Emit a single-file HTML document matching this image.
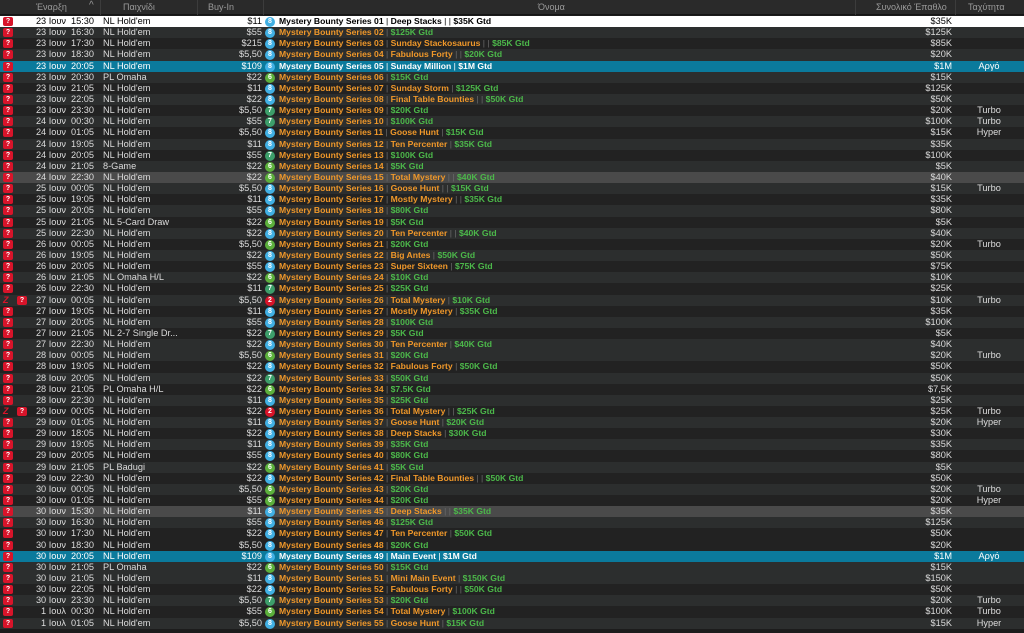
<!DOCTYPE html>
<html><head><meta charset="utf-8">
<style>
*{margin:0;padding:0;box-sizing:border-box}
body{width:1024px;height:633px;background:#1c1c1c;font-family:"Liberation Sans",sans-serif;overflow:hidden;position:relative;color:#dcdcdc;font-size:9.2px}
.hd{position:absolute;left:0;top:0;width:1024px;height:15px;background:#2a2a2a;border-bottom:1px solid #151515;color:#9a9a9a;font-size:9px}
.hd span{position:absolute;top:2px}
.hd i{position:absolute;top:0;width:1px;height:15px;background:#3c3c3c}
.rows{position:absolute;left:0;top:16px;width:1024px}
.r{position:relative;height:11.15px;line-height:11px;background:#222;white-space:nowrap}
.L{background:#2c2e2e}
.G{background:#4a4a4a}
.W{background:#fff;color:#000}
.B{background:#0b7a9c;color:#fff}
.r>*{position:absolute;top:0}
.q{left:3px;top:1px;width:10px;height:9px;background:#d8142a;border-radius:2px;color:#fff;font-size:7px;font-weight:bold;line-height:9px;text-align:center;font-style:normal}
.z .q{left:17px}
.zz{left:3px;color:#d8142a;font-weight:bold;font-style:italic;font-size:9px}
.d{right:958px;text-align:right}
.t{left:71px}
.g{left:103px}
.b{right:762px;text-align:right}
.c{left:265px;top:1px;width:10px;height:10px;border-radius:50%;color:#fff;font-size:7px;font-weight:bold;line-height:10px;text-align:center;font-style:normal}
.b8{background:#41b0e4}.b6{background:#5cb03c}.b7{background:#3d9e6a}.b2{background:#d8142a}
.n{left:279px;font-weight:bold;font-size:8.6px}
.n em{font-style:normal;color:#f0982a}
.n u{text-decoration:none;color:#6a6a6a;font-weight:normal}
.n b{color:#4cb84a}
.W .n em,.W .n u,.W .n b,.B .n em,.B .n u,.B .n b{color:inherit}
.p{right:72px;text-align:right}
.s{left:955px;width:68px;text-align:center}
</style></head><body>
<div class="hd">
<span style="left:36px">Έναρξη</span><span style="left:89px;font-size:10px;top:0">^</span><i style="left:100px"></i>
<span style="left:123px">Παιχνίδι</span><i style="left:197px"></i>
<span style="left:208px">Buy-In</span><i style="left:263px"></i>
<span style="left:538px">Όνομα</span><i style="left:855px"></i>
<span style="left:876px">Συνολικό Έπαθλο</span><i style="left:955px"></i>
<span style="left:968px">Ταχύτητα</span>
</div>
<div class="rows">
<div class="r W"><i class="q">?</i><span class="d">23 Ιουν</span><span class="t">15:30</span><span class="g">NL Hold'em</span><span class="b">$11</span><i class="c b8">8</i><span class="n"><em>Mystery Bounty Series 01</em><u> | </u><em>Deep Stacks</em><u> | | </u><b>$35K Gtd</b></span><span class="p">$35K</span></div>
<div class="r L"><i class="q">?</i><span class="d">23 Ιουν</span><span class="t">16:30</span><span class="g">NL Hold'em</span><span class="b">$55</span><i class="c b8">8</i><span class="n"><em>Mystery Bounty Series 02</em><u> | </u><b>$125K Gtd</b></span><span class="p">$125K</span></div>
<div class="r"><i class="q">?</i><span class="d">23 Ιουν</span><span class="t">17:30</span><span class="g">NL Hold'em</span><span class="b">$215</span><i class="c b8">8</i><span class="n"><em>Mystery Bounty Series 03</em><u> | </u><em>Sunday Stackosaurus</em><u> | | </u><b>$85K Gtd</b></span><span class="p">$85K</span></div>
<div class="r L"><i class="q">?</i><span class="d">23 Ιουν</span><span class="t">18:30</span><span class="g">NL Hold'em</span><span class="b">$5,50</span><i class="c b8">8</i><span class="n"><em>Mystery Bounty Series 04</em><u> | </u><em>Fabulous Forty</em><u> | | </u><b>$20K Gtd</b></span><span class="p">$20K</span></div>
<div class="r B"><i class="q">?</i><span class="d">23 Ιουν</span><span class="t">20:05</span><span class="g">NL Hold'em</span><span class="b">$109</span><i class="c b8">8</i><span class="n"><em>Mystery Bounty Series 05</em><u> | </u><em>Sunday Million</em><u> | </u><b>$1M Gtd</b></span><span class="p">$1M</span><span class="s">Αργό</span></div>
<div class="r L"><i class="q">?</i><span class="d">23 Ιουν</span><span class="t">20:30</span><span class="g">PL Omaha</span><span class="b">$22</span><i class="c b6">6</i><span class="n"><em>Mystery Bounty Series 06</em><u> | </u><b>$15K Gtd</b></span><span class="p">$15K</span></div>
<div class="r"><i class="q">?</i><span class="d">23 Ιουν</span><span class="t">21:05</span><span class="g">NL Hold'em</span><span class="b">$11</span><i class="c b8">8</i><span class="n"><em>Mystery Bounty Series 07</em><u> | </u><em>Sunday Storm</em><u> | </u><b>$125K Gtd</b></span><span class="p">$125K</span></div>
<div class="r L"><i class="q">?</i><span class="d">23 Ιουν</span><span class="t">22:05</span><span class="g">NL Hold'em</span><span class="b">$22</span><i class="c b8">8</i><span class="n"><em>Mystery Bounty Series 08</em><u> | </u><em>Final Table Bounties</em><u> | | </u><b>$50K Gtd</b></span><span class="p">$50K</span></div>
<div class="r"><i class="q">?</i><span class="d">23 Ιουν</span><span class="t">23:30</span><span class="g">NL Hold'em</span><span class="b">$5,50</span><i class="c b7">7</i><span class="n"><em>Mystery Bounty Series 09</em><u> | </u><b>$20K Gtd</b></span><span class="p">$20K</span><span class="s">Turbo</span></div>
<div class="r L"><i class="q">?</i><span class="d">24 Ιουν</span><span class="t">00:30</span><span class="g">NL Hold'em</span><span class="b">$55</span><i class="c b7">7</i><span class="n"><em>Mystery Bounty Series 10</em><u> | </u><b>$100K Gtd</b></span><span class="p">$100K</span><span class="s">Turbo</span></div>
<div class="r"><i class="q">?</i><span class="d">24 Ιουν</span><span class="t">01:05</span><span class="g">NL Hold'em</span><span class="b">$5,50</span><i class="c b8">8</i><span class="n"><em>Mystery Bounty Series 11</em><u> | </u><em>Goose Hunt</em><u> | </u><b>$15K Gtd</b></span><span class="p">$15K</span><span class="s">Hyper</span></div>
<div class="r L"><i class="q">?</i><span class="d">24 Ιουν</span><span class="t">19:05</span><span class="g">NL Hold'em</span><span class="b">$11</span><i class="c b8">8</i><span class="n"><em>Mystery Bounty Series 12</em><u> | </u><em>Ten Percenter</em><u> | </u><b>$35K Gtd</b></span><span class="p">$35K</span></div>
<div class="r"><i class="q">?</i><span class="d">24 Ιουν</span><span class="t">20:05</span><span class="g">NL Hold'em</span><span class="b">$55</span><i class="c b7">7</i><span class="n"><em>Mystery Bounty Series 13</em><u> | </u><b>$100K Gtd</b></span><span class="p">$100K</span></div>
<div class="r L"><i class="q">?</i><span class="d">24 Ιουν</span><span class="t">21:05</span><span class="g">8-Game</span><span class="b">$22</span><i class="c b6">6</i><span class="n"><em>Mystery Bounty Series 14</em><u> | </u><b>$5K Gtd</b></span><span class="p">$5K</span></div>
<div class="r G"><i class="q">?</i><span class="d">24 Ιουν</span><span class="t">22:30</span><span class="g">NL Hold'em</span><span class="b">$22</span><i class="c b6">6</i><span class="n"><em>Mystery Bounty Series 15</em><u> | </u><em>Total Mystery</em><u> | | </u><b>$40K Gtd</b></span><span class="p">$40K</span></div>
<div class="r L"><i class="q">?</i><span class="d">25 Ιουν</span><span class="t">00:05</span><span class="g">NL Hold'em</span><span class="b">$5,50</span><i class="c b8">8</i><span class="n"><em>Mystery Bounty Series 16</em><u> | </u><em>Goose Hunt</em><u> | | </u><b>$15K Gtd</b></span><span class="p">$15K</span><span class="s">Turbo</span></div>
<div class="r"><i class="q">?</i><span class="d">25 Ιουν</span><span class="t">19:05</span><span class="g">NL Hold'em</span><span class="b">$11</span><i class="c b8">8</i><span class="n"><em>Mystery Bounty Series 17</em><u> | </u><em>Mostly Mystery</em><u> | | </u><b>$35K Gtd</b></span><span class="p">$35K</span></div>
<div class="r L"><i class="q">?</i><span class="d">25 Ιουν</span><span class="t">20:05</span><span class="g">NL Hold'em</span><span class="b">$55</span><i class="c b8">8</i><span class="n"><em>Mystery Bounty Series 18</em><u> | </u><b>$80K Gtd</b></span><span class="p">$80K</span></div>
<div class="r"><i class="q">?</i><span class="d">25 Ιουν</span><span class="t">21:05</span><span class="g">NL 5-Card Draw</span><span class="b">$22</span><i class="c b6">6</i><span class="n"><em>Mystery Bounty Series 19</em><u> | </u><b>$5K Gtd</b></span><span class="p">$5K</span></div>
<div class="r L"><i class="q">?</i><span class="d">25 Ιουν</span><span class="t">22:30</span><span class="g">NL Hold'em</span><span class="b">$22</span><i class="c b8">8</i><span class="n"><em>Mystery Bounty Series 20</em><u> | </u><em>Ten Percenter</em><u> | | </u><b>$40K Gtd</b></span><span class="p">$40K</span></div>
<div class="r"><i class="q">?</i><span class="d">26 Ιουν</span><span class="t">00:05</span><span class="g">NL Hold'em</span><span class="b">$5,50</span><i class="c b6">6</i><span class="n"><em>Mystery Bounty Series 21</em><u> | </u><b>$20K Gtd</b></span><span class="p">$20K</span><span class="s">Turbo</span></div>
<div class="r L"><i class="q">?</i><span class="d">26 Ιουν</span><span class="t">19:05</span><span class="g">NL Hold'em</span><span class="b">$22</span><i class="c b8">8</i><span class="n"><em>Mystery Bounty Series 22</em><u> | </u><em>Big Antes</em><u> | </u><b>$50K Gtd</b></span><span class="p">$50K</span></div>
<div class="r"><i class="q">?</i><span class="d">26 Ιουν</span><span class="t">20:05</span><span class="g">NL Hold'em</span><span class="b">$55</span><i class="c b8">8</i><span class="n"><em>Mystery Bounty Series 23</em><u> | </u><em>Super Sixteen</em><u> | </u><b>$75K Gtd</b></span><span class="p">$75K</span></div>
<div class="r L"><i class="q">?</i><span class="d">26 Ιουν</span><span class="t">21:05</span><span class="g">NL Omaha H/L</span><span class="b">$22</span><i class="c b6">6</i><span class="n"><em>Mystery Bounty Series 24</em><u> | </u><b>$10K Gtd</b></span><span class="p">$10K</span></div>
<div class="r"><i class="q">?</i><span class="d">26 Ιουν</span><span class="t">22:30</span><span class="g">NL Hold'em</span><span class="b">$11</span><i class="c b7">7</i><span class="n"><em>Mystery Bounty Series 25</em><u> | </u><b>$25K Gtd</b></span><span class="p">$25K</span></div>
<div class="r L z"><span class="zz">Z</span><i class="q">?</i><span class="d">27 Ιουν</span><span class="t">00:05</span><span class="g">NL Hold'em</span><span class="b">$5,50</span><i class="c b2">2</i><span class="n"><em>Mystery Bounty Series 26</em><u> | </u><em>Total Mystery</em><u> | </u><b>$10K Gtd</b></span><span class="p">$10K</span><span class="s">Turbo</span></div>
<div class="r"><i class="q">?</i><span class="d">27 Ιουν</span><span class="t">19:05</span><span class="g">NL Hold'em</span><span class="b">$11</span><i class="c b8">8</i><span class="n"><em>Mystery Bounty Series 27</em><u> | </u><em>Mostly Mystery</em><u> | </u><b>$35K Gtd</b></span><span class="p">$35K</span></div>
<div class="r L"><i class="q">?</i><span class="d">27 Ιουν</span><span class="t">20:05</span><span class="g">NL Hold'em</span><span class="b">$55</span><i class="c b8">8</i><span class="n"><em>Mystery Bounty Series 28</em><u> | </u><b>$100K Gtd</b></span><span class="p">$100K</span></div>
<div class="r"><i class="q">?</i><span class="d">27 Ιουν</span><span class="t">21:05</span><span class="g">NL 2-7 Single Dr...</span><span class="b">$22</span><i class="c b7">7</i><span class="n"><em>Mystery Bounty Series 29</em><u> | </u><b>$5K Gtd</b></span><span class="p">$5K</span></div>
<div class="r L"><i class="q">?</i><span class="d">27 Ιουν</span><span class="t">22:30</span><span class="g">NL Hold'em</span><span class="b">$22</span><i class="c b8">8</i><span class="n"><em>Mystery Bounty Series 30</em><u> | </u><em>Ten Percenter</em><u> | </u><b>$40K Gtd</b></span><span class="p">$40K</span></div>
<div class="r L"><i class="q">?</i><span class="d">28 Ιουν</span><span class="t">00:05</span><span class="g">NL Hold'em</span><span class="b">$5,50</span><i class="c b6">6</i><span class="n"><em>Mystery Bounty Series 31</em><u> | </u><b>$20K Gtd</b></span><span class="p">$20K</span><span class="s">Turbo</span></div>
<div class="r"><i class="q">?</i><span class="d">28 Ιουν</span><span class="t">19:05</span><span class="g">NL Hold'em</span><span class="b">$22</span><i class="c b8">8</i><span class="n"><em>Mystery Bounty Series 32</em><u> | </u><em>Fabulous Forty</em><u> | </u><b>$50K Gtd</b></span><span class="p">$50K</span></div>
<div class="r L"><i class="q">?</i><span class="d">28 Ιουν</span><span class="t">20:05</span><span class="g">NL Hold'em</span><span class="b">$22</span><i class="c b7">7</i><span class="n"><em>Mystery Bounty Series 33</em><u> | </u><b>$50K Gtd</b></span><span class="p">$50K</span></div>
<div class="r"><i class="q">?</i><span class="d">28 Ιουν</span><span class="t">21:05</span><span class="g">PL Omaha H/L</span><span class="b">$22</span><i class="c b6">6</i><span class="n"><em>Mystery Bounty Series 34</em><u> | </u><b>$7.5K Gtd</b></span><span class="p">$7,5K</span></div>
<div class="r L"><i class="q">?</i><span class="d">28 Ιουν</span><span class="t">22:30</span><span class="g">NL Hold'em</span><span class="b">$11</span><i class="c b8">8</i><span class="n"><em>Mystery Bounty Series 35</em><u> | </u><b>$25K Gtd</b></span><span class="p">$25K</span></div>
<div class="r z"><span class="zz">Z</span><i class="q">?</i><span class="d">29 Ιουν</span><span class="t">00:05</span><span class="g">NL Hold'em</span><span class="b">$22</span><i class="c b2">2</i><span class="n"><em>Mystery Bounty Series 36</em><u> | </u><em>Total Mystery</em><u> | | </u><b>$25K Gtd</b></span><span class="p">$25K</span><span class="s">Turbo</span></div>
<div class="r L"><i class="q">?</i><span class="d">29 Ιουν</span><span class="t">01:05</span><span class="g">NL Hold'em</span><span class="b">$11</span><i class="c b8">8</i><span class="n"><em>Mystery Bounty Series 37</em><u> | </u><em>Goose Hunt</em><u> | </u><b>$20K Gtd</b></span><span class="p">$20K</span><span class="s">Hyper</span></div>
<div class="r"><i class="q">?</i><span class="d">29 Ιουν</span><span class="t">18:05</span><span class="g">NL Hold'em</span><span class="b">$22</span><i class="c b8">8</i><span class="n"><em>Mystery Bounty Series 38</em><u> | </u><em>Deep Stacks</em><u> | </u><b>$30K Gtd</b></span><span class="p">$30K</span></div>
<div class="r L"><i class="q">?</i><span class="d">29 Ιουν</span><span class="t">19:05</span><span class="g">NL Hold'em</span><span class="b">$11</span><i class="c b8">8</i><span class="n"><em>Mystery Bounty Series 39</em><u> | </u><b>$35K Gtd</b></span><span class="p">$35K</span></div>
<div class="r"><i class="q">?</i><span class="d">29 Ιουν</span><span class="t">20:05</span><span class="g">NL Hold'em</span><span class="b">$55</span><i class="c b8">8</i><span class="n"><em>Mystery Bounty Series 40</em><u> | </u><b>$80K Gtd</b></span><span class="p">$80K</span></div>
<div class="r L"><i class="q">?</i><span class="d">29 Ιουν</span><span class="t">21:05</span><span class="g">PL Badugi</span><span class="b">$22</span><i class="c b6">6</i><span class="n"><em>Mystery Bounty Series 41</em><u> | </u><b>$5K Gtd</b></span><span class="p">$5K</span></div>
<div class="r"><i class="q">?</i><span class="d">29 Ιουν</span><span class="t">22:30</span><span class="g">NL Hold'em</span><span class="b">$22</span><i class="c b8">8</i><span class="n"><em>Mystery Bounty Series 42</em><u> | </u><em>Final Table Bounties</em><u> | | </u><b>$50K Gtd</b></span><span class="p">$50K</span></div>
<div class="r L"><i class="q">?</i><span class="d">30 Ιουν</span><span class="t">00:05</span><span class="g">NL Hold'em</span><span class="b">$5,50</span><i class="c b6">6</i><span class="n"><em>Mystery Bounty Series 43</em><u> | </u><b>$20K Gtd</b></span><span class="p">$20K</span><span class="s">Turbo</span></div>
<div class="r"><i class="q">?</i><span class="d">30 Ιουν</span><span class="t">01:05</span><span class="g">NL Hold'em</span><span class="b">$55</span><i class="c b6">6</i><span class="n"><em>Mystery Bounty Series 44</em><u> | </u><b>$20K Gtd</b></span><span class="p">$20K</span><span class="s">Hyper</span></div>
<div class="r G"><i class="q">?</i><span class="d">30 Ιουν</span><span class="t">15:30</span><span class="g">NL Hold'em</span><span class="b">$11</span><i class="c b8">8</i><span class="n"><em>Mystery Bounty Series 45</em><u> | </u><em>Deep Stacks</em><u> | | </u><b>$35K Gtd</b></span><span class="p">$35K</span></div>
<div class="r L"><i class="q">?</i><span class="d">30 Ιουν</span><span class="t">16:30</span><span class="g">NL Hold'em</span><span class="b">$55</span><i class="c b8">8</i><span class="n"><em>Mystery Bounty Series 46</em><u> | </u><b>$125K Gtd</b></span><span class="p">$125K</span></div>
<div class="r"><i class="q">?</i><span class="d">30 Ιουν</span><span class="t">17:30</span><span class="g">NL Hold'em</span><span class="b">$22</span><i class="c b8">8</i><span class="n"><em>Mystery Bounty Series 47</em><u> | </u><em>Ten Percenter</em><u> | </u><b>$50K Gtd</b></span><span class="p">$50K</span></div>
<div class="r"><i class="q">?</i><span class="d">30 Ιουν</span><span class="t">18:30</span><span class="g">NL Hold'em</span><span class="b">$5,50</span><i class="c b8">8</i><span class="n"><em>Mystery Bounty Series 48</em><u> | </u><b>$20K Gtd</b></span><span class="p">$20K</span></div>
<div class="r B"><i class="q">?</i><span class="d">30 Ιουν</span><span class="t">20:05</span><span class="g">NL Hold'em</span><span class="b">$109</span><i class="c b8">8</i><span class="n"><em>Mystery Bounty Series 49</em><u> | </u><em>Main Event</em><u> | </u><b>$1M Gtd</b></span><span class="p">$1M</span><span class="s">Αργό</span></div>
<div class="r L"><i class="q">?</i><span class="d">30 Ιουν</span><span class="t">21:05</span><span class="g">PL Omaha</span><span class="b">$22</span><i class="c b6">6</i><span class="n"><em>Mystery Bounty Series 50</em><u> | </u><b>$15K Gtd</b></span><span class="p">$15K</span></div>
<div class="r L"><i class="q">?</i><span class="d">30 Ιουν</span><span class="t">21:05</span><span class="g">NL Hold'em</span><span class="b">$11</span><i class="c b8">8</i><span class="n"><em>Mystery Bounty Series 51</em><u> | </u><em>Mini Main Event</em><u> | </u><b>$150K Gtd</b></span><span class="p">$150K</span></div>
<div class="r"><i class="q">?</i><span class="d">30 Ιουν</span><span class="t">22:05</span><span class="g">NL Hold'em</span><span class="b">$22</span><i class="c b8">8</i><span class="n"><em>Mystery Bounty Series 52</em><u> | </u><em>Fabulous Forty</em><u> | | </u><b>$50K Gtd</b></span><span class="p">$50K</span></div>
<div class="r L"><i class="q">?</i><span class="d">30 Ιουν</span><span class="t">23:30</span><span class="g">NL Hold'em</span><span class="b">$5,50</span><i class="c b7">7</i><span class="n"><em>Mystery Bounty Series 53</em><u> | </u><b>$20K Gtd</b></span><span class="p">$20K</span><span class="s">Turbo</span></div>
<div class="r"><i class="q">?</i><span class="d">1 Ιουλ</span><span class="t">00:30</span><span class="g">NL Hold'em</span><span class="b">$55</span><i class="c b6">6</i><span class="n"><em>Mystery Bounty Series 54</em><u> | </u><em>Total Mystery</em><u> | </u><b>$100K Gtd</b></span><span class="p">$100K</span><span class="s">Turbo</span></div>
<div class="r L"><i class="q">?</i><span class="d">1 Ιουλ</span><span class="t">01:05</span><span class="g">NL Hold'em</span><span class="b">$5,50</span><i class="c b8">8</i><span class="n"><em>Mystery Bounty Series 55</em><u> | </u><em>Goose Hunt</em><u> | </u><b>$15K Gtd</b></span><span class="p">$15K</span><span class="s">Hyper</span></div>
</div>
</body></html>
